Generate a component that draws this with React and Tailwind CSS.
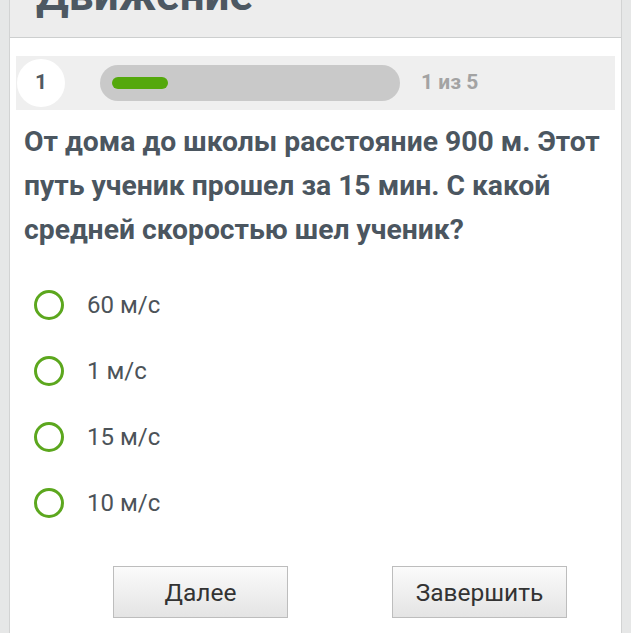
const options = ['60 м/с', '1 м/с', '15 м/с', '10 м/с'];

const App = () => {
    return (
        <div className="h-[633px] w-full overflow-hidden bg-[#e6e7e7] px-[9px]" style={{ fontFamily: 'Roboto, "Noto Sans", sans-serif' }}>
            <div className="h-full border-x border-[#d2d3d3] bg-white">
                {/* Header */}
                <div className="flex h-[38px] items-end overflow-hidden border-b border-[#cdcfcf] bg-[#ededed] pb-[20px] pl-[26px]">
                    <h1 className="text-[44px] leading-none font-bold text-[#4d5862]">Движение</h1>
                </div>

                {/* Progress */}
                <div className="mx-[6px] mt-[18px] flex h-[54px] items-center bg-[#efefef] pl-px">
                    <div className="flex h-[48px] w-[48px] items-center justify-center rounded-full bg-white text-[21px] font-bold text-[#505a62]">1</div>
                    <div className="ml-[35px] flex h-[36px] w-[300px] items-center rounded-full bg-[#c9c9c9] px-[12px]">
                        <div className="h-[12px] w-[56px] rounded-full bg-[#54a80c]"></div>
                    </div>
                    <span className="ml-[21px] text-[21px] font-bold text-[#a3a3a3]">1 из 5</span>
                </div>

                {/* Question */}
                <p className="mt-[10px] px-[14px] text-[28.3px] leading-[44px] font-bold text-[#4b5660]">
                    От дома до школы расстояние 900 м. Этот путь ученик прошел за 15 мин. С какой средней скоростью шел ученик?
                </p>

                {/* Options */}
                <div className="mt-[20px] pl-[24px]">
                    {options.map((opt) => (
                        <label key={opt} className="flex h-[66px] items-center">
                            <span className="h-[30px] w-[30px] rounded-full border-[3px] border-[#5ca71e]"></span>
                            <span className="ml-[23px] text-[24px] text-[#4c5359]">{opt}</span>
                        </label>
                    ))}
                </div>

                {/* Buttons */}
                <div className="mt-[30px] flex gap-[104px] pl-[103px]">
                    <button className="h-[52px] w-[175px] border border-[#bdbdbd] bg-gradient-to-b from-[#fbfbfb] to-[#e4e4e4] pt-[2px] text-[24.5px] text-[#333]">Далее</button>
                    <button className="h-[52px] w-[175px] border border-[#bdbdbd] bg-gradient-to-b from-[#fbfbfb] to-[#e4e4e4] pt-[2px] text-[24.5px] text-[#333]">Завершить</button>
                </div>
            </div>
        </div>
    );
};

export default App;
